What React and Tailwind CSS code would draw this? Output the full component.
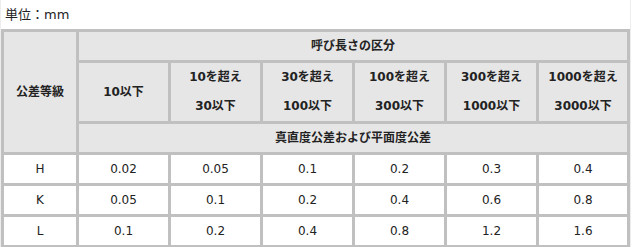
const cols = ["10以下", ["10を超え", "30以下"], ["30を超え", "100以下"], ["100を超え", "300以下"], ["300を超え", "1000以下"], ["1000を超え", "3000以下"]];

const rows = [
  ["H", "0.02", "0.05", "0.1", "0.2", "0.3", "0.4"],
  ["K", "0.05", "0.1", "0.2", "0.4", "0.6", "0.8"],
  ["L", "0.1", "0.2", "0.4", "0.8", "1.2", "1.6"],
];

const font = { fontFamily: '"DejaVu Sans", "Noto Sans CJK JP", sans-serif' };

export default function App() {
  const th = "bg-[#e6e6e6] border-r-[3px] border-b-[3px] border-[#c0c0c0] font-bold text-center align-middle p-0";
  const td = "bg-white border-r-[3px] border-b-[3px] border-[#c0c0c0] text-center align-middle p-0 h-[31px]";

  return (
    <div className="w-[631px] bg-white text-[12px] text-[#222] border-r border-l border-[#ededed]" style={font}>
      <div className="h-[29px] flex items-center pl-[4px] text-[13px]">単位：mm</div>
      <table className="table-fixed border-separate border-spacing-0 border-l-[3px] border-t-[3px] border-[#c0c0c0] w-[629px]">
        <colgroup>
          <col className="w-[75px]" />
          <col className="w-[92px]" />
          <col className="w-[92px]" />
          <col className="w-[92px]" />
          <col className="w-[92px]" />
          <col className="w-[92px]" />
          <col className="w-[91px]" />
        </colgroup>
        <thead>
          <tr>
            <th rowSpan={3} className={th}>公差等級</th>
            <th colSpan={6} className={`${th} h-[31px]`}>呼び長さの区分</th>
          </tr>
          <tr>
            {cols.map((c, i) => (
              <th key={i} className={`${th} h-[61px] leading-[29px]`}>
                {Array.isArray(c) ? (
                  <>
                    <div>{c[0]}</div>
                    <div>{c[1]}</div>
                  </>
                ) : (
                  c
                )}
              </th>
            ))}
          </tr>
          <tr>
            <th colSpan={6} className={`${th} h-[31px]`}>真直度公差および平面度公差</th>
          </tr>
        </thead>
        <tbody>
          {rows.map((r) => (
            <tr key={r[0]}>
              {r.map((v, i) => (
                <td key={i} className={td}>{v}</td>
              ))}
            </tr>
          ))}
        </tbody>
      </table>
    </div>
  );
}
